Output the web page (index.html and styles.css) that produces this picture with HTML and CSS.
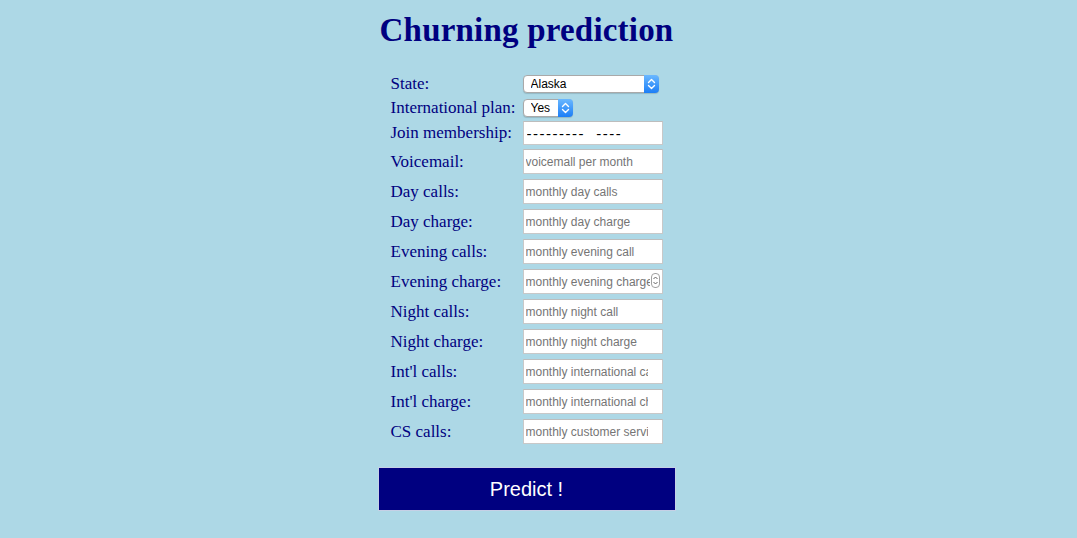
FILE: index.html
```html
<!DOCTYPE html>
<html lang="en">
<head>
<meta charset="utf-8">
<title>Churning prediction</title>
<link rel="stylesheet" href="styles.css">
</head>
<body>
<div class="page">
  <h1 class="title">Churning prediction</h1>
  <form class="form">
    <div class="rows">
      <div class="row row-state">
        <label class="lbl">State:</label>
        <span class="sel sel-state">
          <select class="select"><option>Alaska</option></select>
          <span class="sel-btn"><svg width="9" height="12" viewBox="0 0 9 12"><path d="M1.5 4.5 L4.5 1.5 L7.5 4.5 M1.5 7.5 L4.5 10.5 L7.5 7.5" fill="none" stroke="#fff" stroke-width="1.4" stroke-linecap="round" stroke-linejoin="round"/></svg></span>
        </span>
      </div>
      <div class="row row-plan">
        <label class="lbl">International plan:</label>
        <span class="sel sel-plan">
          <select class="select"><option>Yes</option></select>
          <span class="sel-btn"><svg width="9" height="12" viewBox="0 0 9 12"><path d="M1.5 4.5 L4.5 1.5 L7.5 4.5 M1.5 7.5 L4.5 10.5 L7.5 7.5" fill="none" stroke="#fff" stroke-width="1.4" stroke-linecap="round" stroke-linejoin="round"/></svg></span>
        </span>
      </div>
      <div class="row row-join">
        <label class="lbl">Join membership:</label>
        <input class="field field-join" type="text" value="---------  ----">
      </div>
      <div class="row"><label class="lbl">Voicemail:</label><input class="field" type="text" placeholder="voicemall per month"></div>
      <div class="row"><label class="lbl">Day calls:</label><input class="field" type="text" placeholder="monthly day calls"></div>
      <div class="row"><label class="lbl">Day charge:</label><input class="field" type="text" placeholder="monthly day charge"></div>
      <div class="row"><label class="lbl">Evening calls:</label><input class="field" type="text" placeholder="monthly evening call"></div>
      <div class="row">
        <label class="lbl">Evening charge:</label>
        <span class="num">
          <input class="field field-num" type="text" placeholder="monthly evening charge">
          <span class="spin"><svg width="7" height="13" viewBox="0 0 7 13"><path d="M1.5 5 L3.5 3 L5.5 5 M1.5 8 L3.5 10 L5.5 8" fill="none" stroke="#555" stroke-width="0.9"/></svg></span>
        </span>
      </div>
      <div class="row"><label class="lbl">Night calls:</label><input class="field" type="text" placeholder="monthly night call"></div>
      <div class="row"><label class="lbl">Night charge:</label><input class="field" type="text" placeholder="monthly night charge"></div>
      <div class="row"><label class="lbl">Int'l calls:</label><input class="field" type="text" placeholder="monthly international calls"></div>
      <div class="row"><label class="lbl">Int'l charge:</label><input class="field" type="text" placeholder="monthly international charge"></div>
      <div class="row"><label class="lbl">CS calls:</label><input class="field" type="text" placeholder="monthly customer service calls"></div>
    </div>
    <button class="predict" type="button">Predict !</button>
  </form>
</div>
</body>
</html>
```

FILE: styles.css
```css
html, body {
  margin: 0;
  padding: 0;
  background: #add8e6;
}

body {
  font-family: "Liberation Serif", "Times New Roman", serif;
  color: #000080;
}

.page {
  width: 298px;
  margin-left: calc(50% - 161px);
  padding-top: 10px;
}

.title {
  margin: 0;
  font-size: 33px;
  line-height: 40px;
  font-weight: bold;
  text-align: center;
  letter-spacing: 0.2px;
  color: #000080;
}

.form {
  margin: 0;
}

.rows {
  padding-left: 13px;
  margin-top: 25px;
  display: flex;
  flex-direction: column;
}

.row {
  display: flex;
  align-items: center;
  margin-bottom: 5px;
}

.row-state { margin-bottom: 6px; }
.row-plan { margin-bottom: 4px; }
.row-join { margin-bottom: 4px; }

.lbl {
  width: 132px;
  flex: none;
  font-size: 17px;
  line-height: 16px;
  white-space: nowrap;
}

.sel {
  position: relative;
  display: inline-flex;
  height: 18px;
}

.sel-state { width: 136px; }
.sel-plan { width: 50px; }

.select {
  -webkit-appearance: none;
  appearance: none;
  width: 100%;
  height: 18px;
  box-sizing: border-box;
  margin: 0;
  padding: 0 0 0 7px;
  border: 1px solid #a9a9a9;
  border-radius: 4px;
  background: #fff;
  box-shadow: 0 1px 1px rgba(0, 0, 0, 0.15);
  font-family: "Liberation Sans", Arial, sans-serif;
  font-size: 12px;
  color: #000;
}

.sel-btn {
  position: absolute;
  right: 0;
  top: 0;
  width: 15px;
  height: 18px;
  border-radius: 0 4px 4px 0;
  background: linear-gradient(#6ab8ff, #1c7ef6);
  display: flex;
  align-items: center;
  justify-content: center;
}

.field {
  width: 140px;
  height: 25px;
  box-sizing: border-box;
  margin: 0;
  padding: 0 14px 0 2px;
  border: 1px solid #c8c8c8;
  border-top-color: #bdbdbd;
  background: #fff;
  font-family: "Liberation Sans", Arial, sans-serif;
  font-size: 12px;
  color: #000;
  outline: none;
}

.field::placeholder {
  color: #757575;
}

.field-join {
  height: 24px;
  font-size: 15px;
  padding-left: 3px;
  letter-spacing: 1.5px;
}

.num {
  position: relative;
  display: inline-flex;
}

.field-num {
  padding-right: 12px;
}

.spin {
  position: absolute;
  right: 3px;
  top: 4px;
  width: 7px;
  height: 13px;
  border: 1px solid #a0a0a0;
  border-radius: 4px;
  background: #fff;
  display: flex;
  align-items: center;
  justify-content: center;
}

.predict {
  display: block;
  box-sizing: border-box;
  width: 298px;
  height: 44px;
  margin-top: 18px;
  padding: 0;
  border: 1px solid #c6d0e6;
  background: #000080;
  color: #fff;
  font-family: "Liberation Sans", Arial, sans-serif;
  font-size: 20px;
}
```
